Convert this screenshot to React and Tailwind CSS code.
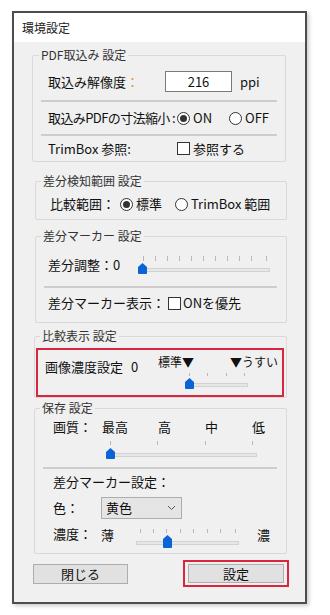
import React from 'react';

// ラジオボタン
function Radio({ checked }) {
    return (
        <span className="w-[13px] h-[13px] rounded-full border border-[#333] bg-white flex items-center justify-center shrink-0">
            {checked && <span className="w-[7px] h-[7px] rounded-full bg-[#333]" />}
        </span>
    );
}

// チェックボックス
function Check() {
    return <span className="w-[13px] h-[13px] border border-[#333] bg-white shrink-0" />;
}

// スライダー (目盛り・トラック・つまみ)
function Slider({ w, h, ticks, tickY, track, thumb }) {
    const [tx1, tx2, ty1, ty2] = track;
    const [x1, x2, y1, y2] = thumb;
    const mid = (x1 + x2) / 2;
    return (
        <svg width={w} height={h} className="shrink-0 block">
            {ticks.map((x, i) => (
                <line key={i} x1={x} x2={x} y1={tickY[0]} y2={tickY[1]} stroke="#b8b8b8" strokeWidth="1" />
            ))}
            <rect x={tx1 + 0.5} y={ty1 + 0.5} width={tx2 - tx1 - 1} height={ty2 - ty1 - 1} fill="#e7e7e7" stroke="#d2d2d2" strokeWidth="1" />
            <path
                d={`M${x1} ${y1 + 4} L${mid} ${y1} L${x2} ${y1 + 4} L${x2} ${y2 - 1} Q${x2} ${y2} ${x2 - 1} ${y2} L${x1 + 1} ${y2} Q${x1} ${y2} ${x1} ${y2 - 1} Z`}
                fill="#0a64d6"
            />
        </svg>
    );
}

function Group({ title, className, legendClass = 'ml-[5px]', children }) {
    return (
        <fieldset className={`border border-[#d9d9d9] rounded-[2px] ${className}`}>
            <legend className={`${legendClass} px-[2px] text-[12px] leading-[16px] text-[#333]`}>{title}</legend>
            {children}
        </fieldset>
    );
}

function Sep({ className }) {
    return <div className={`h-[2px] bg-[#cdcdcd] ${className}`} />;
}

export default function App() {
    return (
        <div className="w-[330px] h-[615px] bg-white pt-[11px] pl-[12px] font-['Noto_Sans_CJK_JP',sans-serif] text-[#111]">
            <div className="w-[295px] h-[593px] border-2 border-[#4d4d4d] bg-[#f0f0f0] shadow-[2px_2px_4px_rgba(0,0,0,0.2)] flex flex-col">
                {/* タイトルバー */}
                <div className="h-[29px] bg-white pl-[8px] flex items-center text-[12px] text-[#222]">環境設定</div>

                {/* PDF取込み 設定 */}
                <Group title="PDF取込み 設定" className="mt-[5px] ml-[18px] w-[254px]" legendClass="ml-[6px]">
                    <div className="h-[37px] flex items-center pl-[15px] text-[13px]">
                        <span className="w-[117px]">取込み解像度<span className="text-[#e09a3a]">：</span></span>
                        <span className="w-[67px] h-[21px] border border-[#7a7a7a] bg-white flex items-center justify-center">216</span>
                        <span className="ml-[8px]">ppi</span>
                    </div>
                    <Sep className="mx-[8px]" />
                    <div className="h-[32px] flex items-center pl-[15px] text-[13px]">
                        <span className="w-[129px] whitespace-nowrap tracking-[-0.6px]">取込みPDFの寸法縮小 :</span>
                        <span className="w-[52px] flex items-center gap-[3px]"><Radio checked />ON</span>
                        <span className="flex items-center gap-[3px]"><Radio />OFF</span>
                    </div>
                    <Sep className="mx-[8px]" />
                    <div className="h-[25px] flex items-center pl-[15px] text-[13px]">
                        <span className="w-[129px]">TrimBox 参照:</span>
                        <span className="flex items-center gap-[3px]"><Check />参照する</span>
                    </div>
                </Group>

                {/* 差分検知範囲 設定 */}
                <Group title="差分検知範囲 設定" className="mt-[11px] ml-[21px] w-[252px]">
                    <div className="h-[30px] flex items-center pl-[14px] text-[13px]">
                        <span className="w-[70px]">比較範囲：</span>
                        <span className="w-[55px] flex items-center gap-[3px]"><Radio checked />標準</span>
                        <span className="flex items-center gap-[3px]"><Radio />TrimBox 範囲</span>
                    </div>
                </Group>

                {/* 差分マーカー 設定 */}
                <Group title="差分マーカー 設定" className="mt-[8px] ml-[21px] w-[252px]">
                    <div className="h-[42px] flex items-center pl-[12px] text-[13px]">
                        <span className="w-[89px]">差分調整：0</span>
                        <Slider
                            w={136}
                            h={22}
                            ticks={[6.5, 18.5, 30.5, 42.5, 54.5, 66.5, 78.5, 90.5, 102.5, 114.5, 129.5]}
                            tickY={[2, 7]}
                            track={[3, 133, 14, 18]}
                            thumb={[1, 10, 9, 20]}
                        />
                    </div>
                    <Sep className="ml-[8px] mr-[9px]" />
                    <div className="h-[30px] flex items-center pl-[12px] text-[13px] mb-[4px]">
                        <span className="w-[120px]">差分マーカー表示：</span>
                        <span className="flex items-center gap-[2px]"><Check />ONを優先</span>
                    </div>
                </Group>

                {/* 比較表示 設定 */}
                <Group title="比較表示 設定" className="mt-[5px] ml-[20px] w-[253px]">
                    <div className="mt-[4px] ml-[1px] w-[248px] h-[49px] border-2 border-[#d9253d] flex items-start">
                        <span className="w-[93px] pl-[7px] mt-[9px] text-[13px] leading-[16px]">画像濃度設定</span>
                        <span className="w-[27px] mt-[9px] text-[13px] leading-[16px]">0</span>
                        <div className="w-[120px] flex flex-col">
                            <div className="mt-[4px] h-[16px] flex justify-between text-[12px] leading-[16px]">
                                <span>標準▼</span>
                                <span>▼うすい</span>
                            </div>
                            <div className="ml-[24px]">
                                <Slider
                                    w={70}
                                    h={22}
                                    ticks={[7.5, 25.5, 44.5, 62.5]}
                                    tickY={[3, 6]}
                                    track={[4, 66, 13, 17]}
                                    thumb={[3, 12, 8, 19]}
                                />
                            </div>
                        </div>
                    </div>
                </Group>

                {/* 保存 設定 */}
                <Group title="保存 設定" className="mt-[2px] ml-[20px] w-[253px]">
                    <div className="h-[22px] flex items-center pl-[18px] text-[13px]">
                        <span className="w-[49px]">画質：</span>
                        <span className="w-[56px]">最高</span>
                        <span className="w-[47px]">高</span>
                        <span className="w-[47px]">中</span>
                        <span>低</span>
                    </div>
                    <div className="ml-[67px]">
                        <Slider
                            w={158}
                            h={24}
                            ticks={[8.5, 55.5, 103.5, 150.5]}
                            tickY={[3, 7]}
                            track={[4, 155, 15, 19]}
                            thumb={[4, 13, 10, 21]}
                        />
                    </div>
                    <Sep className="mt-[5px] ml-[8px] mr-[9px]" />
                    <div className="h-[26px] flex items-center pl-[18px] text-[13px]">差分マーカー設定：</div>
                    <div className="mt-[2px] h-[22px] flex items-center pl-[18px] text-[13px]">
                        <span className="w-[48px]">色：</span>
                        <span className="w-[81px] h-[22px] bg-[#e5e5e5] border border-[#adadad] flex items-center justify-between pl-[4px] pr-[5px]">
                            黄色
                            <svg width="9" height="6" viewBox="0 0 9 6">
                                <polyline points="1,1 4.5,4.5 8,1" fill="none" stroke="#555" strokeWidth="1" />
                            </svg>
                        </span>
                    </div>
                    <div className="mt-[7px] h-[24px] flex items-start pl-[18px] text-[13px] leading-[16px] mb-[3px]">
                        <span className="w-[48px]">濃度：</span>
                        <span className="w-[31px] mt-[1px]">薄</span>
                        <Slider
                            w={112}
                            h={24}
                            ticks={[8.5, 21.5, 34.5, 48.5, 61.5, 75.5, 88.5, 103.5]}
                            tickY={[3, 7]}
                            track={[4, 107, 15, 19]}
                            thumb={[31, 40, 9, 22]}
                        />
                        <span className="ml-[13px] mt-[1px]">濃</span>
                    </div>
                </Group>

                {/* ボタン */}
                <div className="mt-[6px] flex items-center">
                    <button className="ml-[19px] w-[95px] h-[20px] bg-[#e1e1e1] border border-[#adadad] text-[13px] leading-none flex items-center justify-center">閉じる</button>
                    <div className="ml-[55px] border-2 border-[#d9253d] px-[3px] py-[2px]">
                        <button className="w-[96px] h-[19px] bg-[#e1e1e1] border border-[#adadad] text-[13px] leading-none flex items-center justify-center">設定</button>
                    </div>
                </div>
            </div>
        </div>
    );
}
